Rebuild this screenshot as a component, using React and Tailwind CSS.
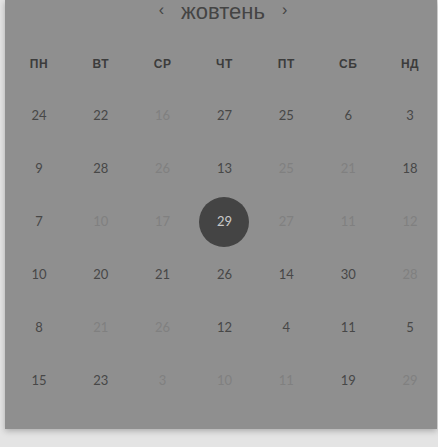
import React from 'react';

const weekDays = ['пн', 'вт', 'ср', 'чт', 'пт', 'сб', 'нд'];

// f = faded (other month), s = selected
const rows = [
    [['24'], ['22'], ['16', 'f'], ['27'], ['25'], ['6'], ['3']],
    [['9'], ['28'], ['26', 'f'], ['13'], ['25', 'f'], ['21', 'f'], ['18']],
    [['7'], ['10', 'f'], ['17', 'f'], ['29', 's'], ['27', 'f'], ['11', 'f'], ['12', 'f']],
    [['10'], ['20'], ['21'], ['26'], ['14'], ['30'], ['28', 'f']],
    [['8'], ['21', 'f'], ['26', 'f'], ['12'], ['4'], ['11'], ['5']],
    [['15'], ['23'], ['3', 'f'], ['10', 'f'], ['11', 'f'], ['19'], ['29', 'f']],
];

function Day({ value, kind }) {
    if (kind === 's') {
        return (
            <div className="w-[50px] h-[50px] rounded-full bg-[#444444] flex items-center justify-center text-[13px] text-[#c9c9c9]">
                {value}
            </div>
        );
    }
    return (
        <span className={kind === 'f' ? 'text-[13px] text-[#808080]' : 'text-[13px] text-[#474747]'}>
            {value}
        </span>
    );
}

export default function App() {
    return (
        <div className="w-[438px] h-[447px] bg-[#e4e4e4] overflow-hidden" style={{ fontFamily: 'Lato, "Noto Sans", sans-serif' }}>
            <div className="ml-[5px] w-[432px] h-[429px] bg-[#8f8f8f] shadow-[0_2px_6px_rgba(0,0,0,0.25)] flex flex-col">
                {/* month switcher */}
                <div className="h-6 flex items-center justify-center gap-[17px] pl-[4px] text-[#444444]" style={{ fontFamily: '"Liberation Sans", Arial, sans-serif' }}>
                    <span className="text-[16px] leading-none -mt-1">‹</span>
                    <span className="text-[22px] leading-none">жовтень</span>
                    <span className="text-[16px] leading-none -mt-1">›</span>
                </div>

                <div className="mt-5 h-10 w-[433px] ml-[3px] grid grid-cols-7 items-center">
                    {weekDays.map((d) => (
                        <div key={d} className="text-center uppercase font-bold text-[12px] tracking-[0.5px] text-[#3c3c3c]" style={{ fontFamily: '"Liberation Sans", Arial, sans-serif' }}>
                            {d}
                        </div>
                    ))}
                </div>

                <div className="mt-[5px] w-[433px] ml-[3px] flex flex-col">
                    {rows.map((row, i) => (
                        <div key={i} className="h-[53px] grid grid-cols-7 items-center">
                            {row.map(([v, k], j) => (
                                <div key={j} className="flex justify-center items-center">
                                    <Day value={v} kind={k} />
                                </div>
                            ))}
                        </div>
                    ))}
                </div>
            </div>
        </div>
    );
}
